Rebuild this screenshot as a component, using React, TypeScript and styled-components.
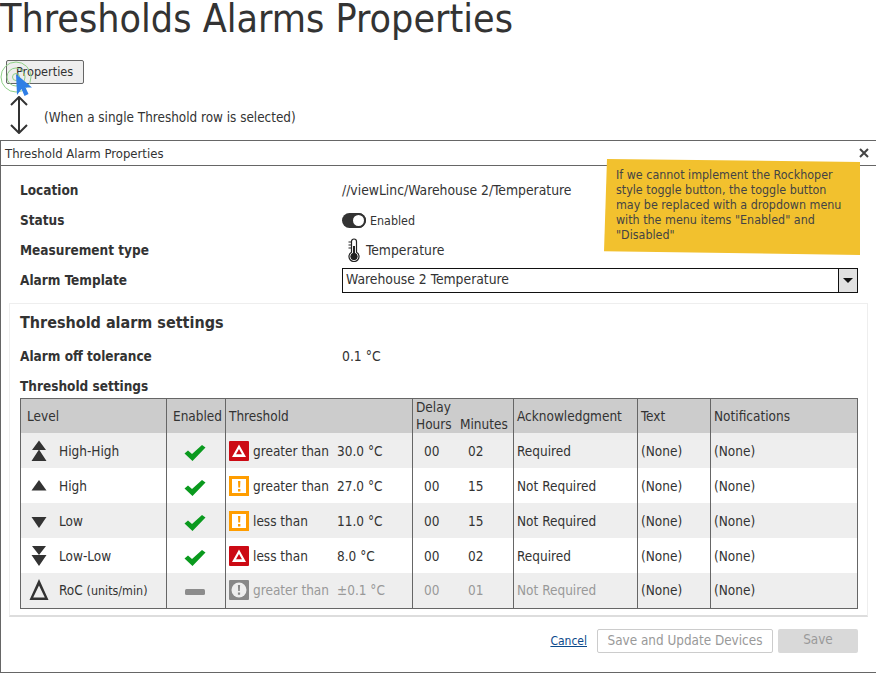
import React from 'react';
import styled, {createGlobalStyle} from 'styled-components';

const Global = createGlobalStyle`
  html, body { margin: 0; padding: 0; background: #fff; }
  body { font-family: "DejaVu Sans", "Liberation Sans", sans-serif; font-stretch: condensed; color: #333; overflow: hidden; }
`;

const Page = styled.div`
  width: 876px;
  height: 673px;
  position: relative;
  overflow: hidden;
  display: flex;
  flex-direction: column;
`;

const Title = styled.h1`
  margin: 0;
  height: 60px;
  font-size: 39.1px;
  line-height: 38px;
  font-weight: 400;
  color: #333;
  white-space: nowrap;
`;

const PropsButton = styled.div`
  margin-left: 6px;
  width: 78px;
  height: 24px;
  box-sizing: border-box;
  border: 1px solid #666;
  border-radius: 2px;
  background: #eee;
  font-size: 12.6px;
  line-height: 22px;
  padding-left: 9px;
`;

const HintRow = styled.div`
  height: 56px;
  box-sizing: border-box;
  padding: 6px 0 0 9px;
  display: flex;
  align-items: center;
  gap: 15px;
  font-size: 13.4px;
  color: #333;
`;

const HintText = styled.span`
  margin-top: 4px;
`;

const Dialog = styled.div`
  flex: 1;
  border: 1px solid #666;
  border-right: none;
  display: flex;
  flex-direction: column;
  box-sizing: border-box;
  position: relative;
`;

const DialogHead = styled.div`
  height: 25px;
  flex: none;
  box-sizing: border-box;
  border-bottom: 1px solid #666;
  display: flex;
  align-items: center;
  justify-content: space-between;
  padding: 1px 7px 0 4px;
  font-size: 13px;
`;

const CloseIcon = styled.svg`
  margin-top: -2px;
`;

const Fields = styled.div`
  padding: 9px 0 0 19px;
  display: grid;
  grid-template-columns: 322px 516px;
  grid-auto-rows: 30px;
  align-items: center;
  height: 128px;
  box-sizing: border-box;
  flex: none;
`;

const FieldLabel = styled.div`
  font-size: 13.5px;
  font-weight: 700;
  color: #333;
`;

const FieldValue = styled.div`
  font-size: 13.8px;
  display: flex;
  align-items: center;
`;

const Toggle = styled.span`
  width: 24px;
  height: 15px;
  border-radius: 8px;
  background: #333;
  display: inline-block;
  position: relative;
  margin-right: 4px;
  &::after {
    content: '';
    position: absolute;
    right: 0;
    top: 0;
    width: 11px;
    height: 11px;
    border-radius: 50%;
    background: #fff;
    border: 2px solid #333;
  }
`;

const SmallText = styled.span`
  font-size: 12.4px;
`;

const Select = styled.div`
  width: 516px;
  height: 25px;
  box-sizing: border-box;
  border: 1px solid #111;
  display: flex;
  align-items: center;
  justify-content: space-between;
  padding-left: 3px;
  font-size: 13.8px;
  line-height: 21px;
`;

const SelectText = styled.span`
  padding-bottom: 2px;
`;

const SelectArrow = styled.span`
  width: 18px;
  height: 23px;
  background: #e1e1e1;
  border-left: 1px solid #111;
  display: flex;
  align-items: center;
  justify-content: center;
  &::after {
    content: '';
    border-left: 5px solid transparent;
    border-right: 5px solid transparent;
    border-top: 5px solid #111;
  }
`;

const Panel = styled.div`
  margin: 9px 8px 0 8px;
  height: 314px;
  box-sizing: border-box;
  border: 1px solid #eee;
  border-bottom: 2px solid #ddd;
  padding: 8px 9px 0 10px;
  flex: none;
`;

const PanelTitle = styled.div`
  font-size: 16px;
  font-weight: 700;
  line-height: 22px;
  color: #333;
`;

const ToleranceRow = styled.div`
  display: grid;
  grid-template-columns: 322px 1fr;
  align-items: center;
  height: 30px;
  margin-top: 7px;
  font-size: 13.8px;
`;

const SubTitle = styled(FieldLabel)`
  line-height: 20px;
  margin: 5px 0 2px;
`;

const Table = styled.table`
  width: 838px;
  border-collapse: collapse;
  table-layout: fixed;
  border: 1px solid #666;
  font-size: 13.5px;
`;

const Th = styled.th`
  background: #ccc;
  height: 34px;
  padding: 0 0 0 3px;
  font-weight: 400;
  text-align: left;
  border-left: 1px solid #666;
  line-height: 17px;
  color: #333;
  &:first-child { border-left: none; padding-left: 6px; }
`;

const CenterTh = styled(Th)`
  text-align: center;
`;

const Tr = styled.tr<{$muted?: boolean}>`
  height: 35px;
  &:nth-child(odd) { background: #eee; }
  color: ${p => (p.$muted ? '#999' : '#333')};
`;

const Td = styled.td`
  padding: 0 0 0 3px;
  border-left: 1px solid #666;
  white-space: nowrap;
  &:first-child { border-left: none; padding-left: 6px; }
`;

const DarkText = styled.span`
  color: #333;
`;

const LevelCell = styled.div`
  display: flex;
  align-items: center;
  gap: 8px;
`;

const LevelIcon = styled.span`
  width: 24px;
  display: flex;
  justify-content: center;
`;

const EnabledCell = styled.div`
  display: flex;
  justify-content: center;
  padding: 4px 6px 0 0;
`;

const ThresholdCell = styled.div`
  display: grid;
  grid-template-columns: 24px 84px 1fr;
  align-items: center;
`;

const DelayHead = styled.div`
  display: grid;
  grid-template-columns: 44px 1fr;
`;

const DelayCell = styled.div`
  display: grid;
  grid-template-columns: 44px 1fr;
  padding-left: 8px;
`;

const Footer = styled.div`
  flex: 1;
  display: flex;
  justify-content: flex-end;
  align-items: center;
  padding: 0 18px 7px 0;
  font-size: 13.4px;
`;

const CancelLink = styled.a`
  font-size: 12px;
  color: #0b4a8b;
  text-decoration: underline;
  margin-right: 10px;
`;

const GhostButton = styled.div`
  width: 176px;
  height: 24px;
  box-sizing: border-box;
  border: 1px solid #ccc;
  border-radius: 2px;
  color: #999;
  text-align: center;
  line-height: 21px;
  margin-right: 5px;
`;

const SaveButton = styled.div`
  width: 80px;
  height: 24px;
  border-radius: 2px;
  background: #d9d9d9;
  color: #999;
  text-align: center;
  line-height: 22px;
`;

const Note = styled.div`
  position: absolute;
  left: 604px;
  top: 159px;
  width: 256px;
  height: 96px;
  box-sizing: border-box;
  padding: 8px 18px 0 12px;
  background: #f2c12e;
  font-size: 12.4px;
  line-height: 15px;
  color: #444;
  clip-path: polygon(3px 0, 100% 3px, 100% 100%, 0 96%);
`;

const CursorMark = styled.svg`
  position: absolute;
  left: 0;
  top: 58px;
`;

const Check = () => (
  <svg width="24" height="18" viewBox="0 0 24 18">
    <path d="M1.500 9.500L5 6.500l4 3.500L19 1l3.500 2.500L9.500 17z" fill="#0a9a1e" />
  </svg>
);

const Dash = () => (
  <svg width="24" height="18" viewBox="0 0 24 18">
    <rect x="2" y="6" width="20" height="6" rx="1.500" fill="#8c8c8c" />
  </svg>
);

const Alert = ({color, kind}: {color: string; kind: 'tri' | 'bang' | 'muted'}) => (
  <svg width="20" height="20" viewBox="0 0 20 20">
    {kind === 'bang' ? (
      <>
        <rect x="1.500" y="1.500" width="17" height="17" fill="#fff" stroke={color} strokeWidth="3" />
        <path d="M9 5h2.400l-.3 6.500h-1.800zM9 13h2.400v2.400H9z" fill={color} />
      </>
    ) : (
      <rect width="20" height="20" rx="1" fill={color} />
    )}
    {kind === 'tri' && <path d="M10 3.500L17 16H3zM10 8l-3 5.200h6z" fill="#fff" fillRule="evenodd" />}
    {kind === 'muted' && (
      <>
        <circle cx="10" cy="10" r="7.500" fill="#eee" />
        <path d="M8.900 5h2.200l-.3 6H9.200zM8.900 12.500h2.200v2.200H8.900z" fill="#888" />
      </>
    )}
  </svg>
);

const Level = ({kind}: {kind: string}) => (
  <svg width="24" height="22" viewBox="0 0 24 22" fill="#333">
    {kind === 'hh' && <path d="M12 0.500l7 9.500H5zM12 9.500l7.500 11.500h-15z" />}
    {kind === 'h' && <path d="M12 5l7.500 10.500h-15z" />}
    {kind === 'l' && <path d="M4.500 7h15L12 18z" />}
    {kind === 'll' && <path d="M5 1h14l-7 9zM4.500 10h15L12 21z" />}
    {kind === 'roc' && <path d="M12 0l9.500 21h-19zM12 6.500l-5.800 12h11.600z" fillRule="evenodd" />}
  </svg>
);

const rows = [
  {name: 'High-High', icon: 'hh', alert: <Alert color="#cc0a14" kind="tri" />, cond: 'greater than', val: '30.0 °C', h: '00', m: '02', ack: 'Required'},
  {name: 'High', icon: 'h', alert: <Alert color="#ff9d00" kind="bang" />, cond: 'greater than', val: '27.0 °C', h: '00', m: '15', ack: 'Not Required'},
  {name: 'Low', icon: 'l', alert: <Alert color="#ff9d00" kind="bang" />, cond: 'less than', val: '11.0 °C', h: '00', m: '15', ack: 'Not Required'},
  {name: 'Low-Low', icon: 'll', alert: <Alert color="#cc0a14" kind="tri" />, cond: 'less than', val: '8.0 °C', h: '00', m: '02', ack: 'Required'},
];

export default function App() {
  return (
    <Page>
      <Global />
      <Title>Thresholds Alarms Properties</Title>
      <PropsButton>Properties</PropsButton>
      <HintRow>
        <svg width="20" height="38" viewBox="0 0 20 38" fill="none" stroke="#333" strokeWidth="2">
          <path d="M10 1v36M2 9l8-8 8 8M2 29l8 8 8-8" />
        </svg>
        <HintText>(When a single Threshold row is selected)</HintText>
      </HintRow>
      <Dialog>
        <DialogHead>
          <span>Threshold Alarm Properties</span>
          <CloseIcon width="10" height="10" viewBox="0 0 10 10" stroke="#444" strokeWidth="2">
            <path d="M1 1l8 8M9 1l-8 8" />
          </CloseIcon>
        </DialogHead>
        <Fields>
          <FieldLabel>Location</FieldLabel>
          <FieldValue>//viewLinc/Warehouse 2/Temperature</FieldValue>
          <FieldLabel>Status</FieldLabel>
          <FieldValue><Toggle /><SmallText>Enabled</SmallText></FieldValue>
          <FieldLabel>Measurement type</FieldLabel>
          <FieldValue>
            <svg width="24" height="24" viewBox="0 0 24 24" fill="none" stroke="#222">
              <path d="M9.500 3.500a2 2 0 0 1 5 0v10.700a5 5 0 1 1-5 0z" strokeWidth="1.200" />
              <circle cx="12" cy="18.500" r="3.200" fill="#222" />
              <path d="M12 8v8" strokeWidth="2" />
              <path d="M6.500 4h3M6.500 7h3M6.500 10h3" strokeWidth="1" />
            </svg>
            <span>Temperature</span>
          </FieldValue>
          <FieldLabel>Alarm Template</FieldLabel>
          <Select><SelectText>Warehouse 2 Temperature</SelectText><SelectArrow /></Select>
        </Fields>
        <Panel>
          <PanelTitle>Threshold alarm settings</PanelTitle>
          <ToleranceRow>
            <FieldLabel>Alarm off tolerance</FieldLabel>
            <span>0.1 °C</span>
          </ToleranceRow>
          <SubTitle>Threshold settings</SubTitle>
          <Table>
            <colgroup>
              <col style={{width: 146}} />
              <col style={{width: 59}} />
              <col style={{width: 187}} />
              <col style={{width: 101}} />
              <col style={{width: 124}} />
              <col style={{width: 73}} />
              <col />
            </colgroup>
            <thead>
              <tr>
                <Th>Level</Th>
                <CenterTh>Enabled</CenterTh>
                <Th>Threshold</Th>
                <Th>Delay<DelayHead><span>Hours</span><span>Minutes</span></DelayHead></Th>
                <Th>Acknowledgment</Th>
                <Th>Text</Th>
                <Th>Notifications</Th>
              </tr>
            </thead>
            <tbody>
              {rows.map(r => (
                <Tr key={r.name}>
                  <Td><LevelCell><LevelIcon><Level kind={r.icon} /></LevelIcon>{r.name}</LevelCell></Td>
                  <Td><EnabledCell><Check /></EnabledCell></Td>
                  <Td><ThresholdCell>{r.alert}<span>{r.cond}</span><span>{r.val}</span></ThresholdCell></Td>
                  <Td><DelayCell><span>{r.h}</span><span>{r.m}</span></DelayCell></Td>
                  <Td>{r.ack}</Td>
                  <Td>(None)</Td>
                  <Td>(None)</Td>
                </Tr>
              ))}
              <Tr $muted>
                <Td><LevelCell><LevelIcon><Level kind="roc" /></LevelIcon><DarkText>RoC <SmallText>(units/min)</SmallText></DarkText></LevelCell></Td>
                <Td><EnabledCell><Dash /></EnabledCell></Td>
                <Td><ThresholdCell><Alert color="#888" kind="muted" /><span>greater than</span><span>±0.1 °C</span></ThresholdCell></Td>
                <Td><DelayCell><span>00</span><span>01</span></DelayCell></Td>
                <Td>Not Required</Td>
                <Td><DarkText>(None)</DarkText></Td>
                <Td><DarkText>(None)</DarkText></Td>
              </Tr>
            </tbody>
          </Table>
        </Panel>
        <Footer>
          <CancelLink>Cancel</CancelLink>
          <GhostButton>Save and Update Devices</GhostButton>
          <SaveButton>Save</SaveButton>
        </Footer>
      </Dialog>
      <Note>
        If we cannot implement the Rockhoper style toggle button, the toggle button may be replaced with a dropdown menu with the menu items "Enabled" and "Disabled"
      </Note>
      <CursorMark width="40" height="42" viewBox="0 0 40 42" fill="none">
        <g stroke="#8fd088">
          <circle cx="16" cy="19" r="3.500" />
          <circle cx="16" cy="19" r="9" />
          <circle cx="16" cy="19" r="15" />
        </g>
        <path d="M16 16l1 21 4.500-6 3 7 4-2-3-6.500H32z" fill="#2f7fe6" />
      </CursorMark>
    </Page>
  );
}
